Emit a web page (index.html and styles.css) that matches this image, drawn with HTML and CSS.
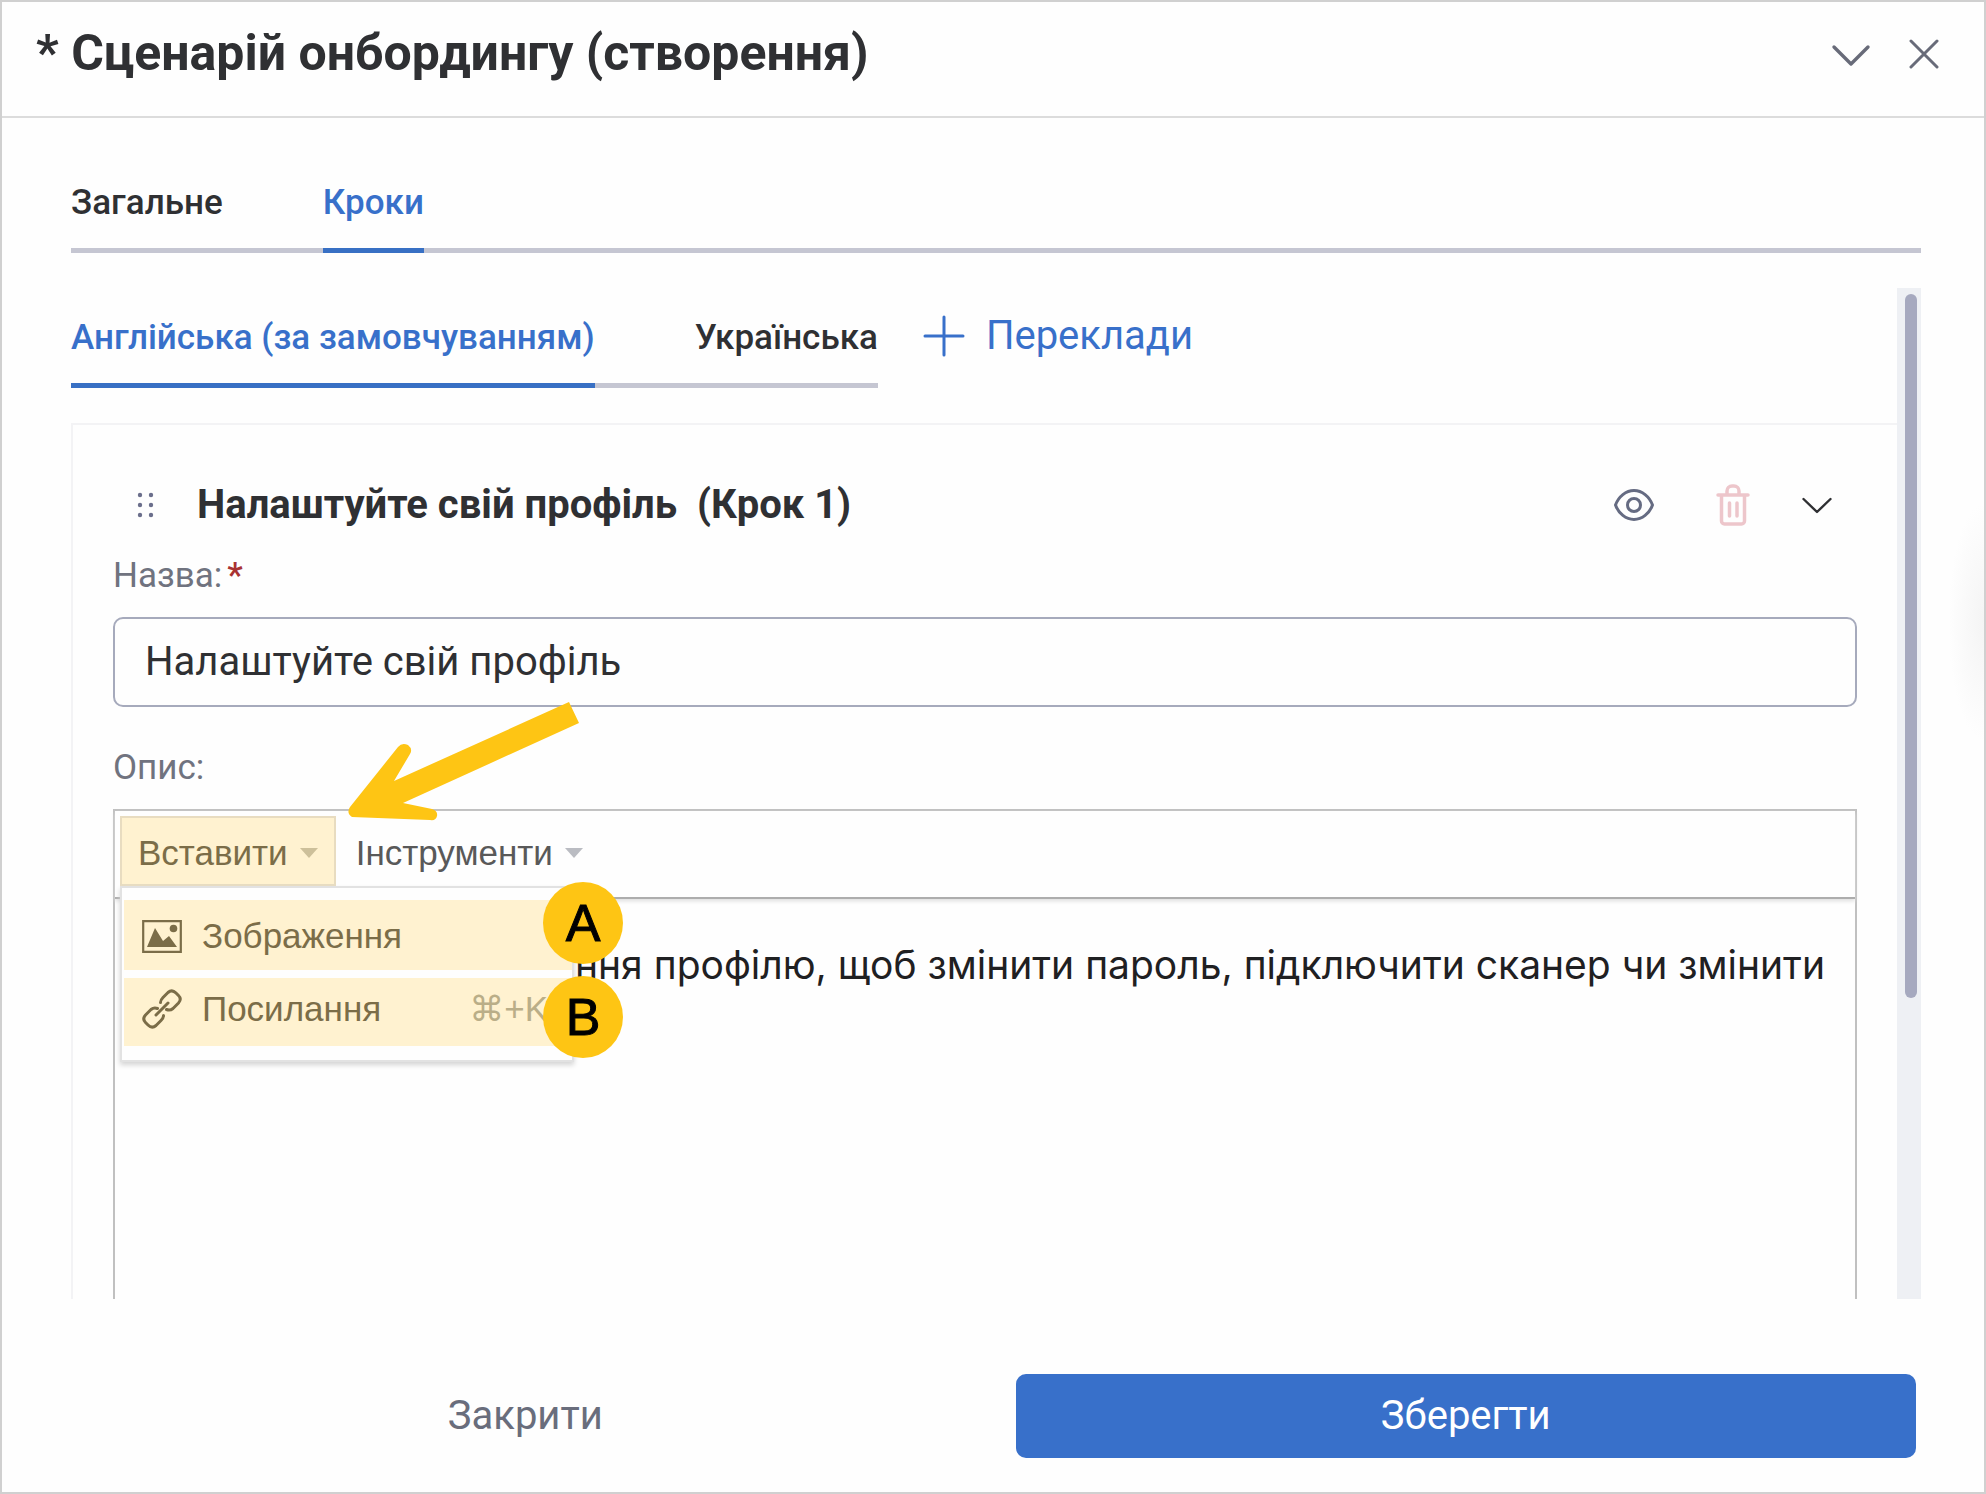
FILE: index.html
```html
<!DOCTYPE html>
<html lang="uk">
<head>
<meta charset="utf-8">
<meta name="viewport" content="width=device-width, initial-scale=1">
<title>Сценарій онбордингу (створення)</title>
<link rel="stylesheet" href="styles.css">
</head>
<body>
<main class="dialog">
  <header class="dialog-header">
    <h1 class="dialog-title">* Сценарій онбордингу (створення)</h1>
    <button class="icon-button" type="button" aria-label="Згорнути">
      <svg width="40" height="40" viewBox="0 0 40 40" fill="none" stroke="#686b79" stroke-width="3.400" stroke-linecap="round" stroke-linejoin="round"><path d="M3 14 20 31 37 14"/></svg>
    </button>
    <button class="icon-button" type="button" aria-label="Закрити вікно">
      <svg width="32" height="32" viewBox="0 0 32 32" fill="none" stroke="#686b79" stroke-width="3" stroke-linecap="round"><path d="M3 4 29 30M29 4 3 30"/></svg>
    </button>
  </header>

  <nav class="tabs tabs-main">
    <a class="tab" href="#general">Загальне</a>
    <a class="tab tab-active" href="#steps">Кроки</a>
  </nav>

  <div class="scroll-area">
    <div class="scroll-content">
      <div class="languages">
        <nav class="tabs">
          <a class="tab tab-active" href="#en">Англійська (за замовчуванням)</a>
          <a class="tab" href="#uk">Українська</a>
        </nav>
        <button class="add-translation" type="button">
          <svg width="42" height="42" viewBox="0 0 42 42" fill="none" stroke="#3870ca" stroke-width="3" stroke-linecap="round"><path d="M21 2v38M2 21h38"/></svg>
          Переклади
        </button>
      </div>

      <section class="step">
        <div class="step-header">
          <svg class="drag" width="18" height="26" viewBox="0 0 18 26" fill="#6b6f8c"><circle cx="3" cy="3" r="2.2"/><circle cx="14" cy="3" r="2.2"/><circle cx="3" cy="13" r="2.2"/><circle cx="14" cy="13" r="2.2"/><circle cx="3" cy="23" r="2.2"/><circle cx="14" cy="23" r="2.2"/></svg>
          <h2 class="step-title">Налаштуйте свій профіль&nbsp; (Крок 1)</h2>
          <button class="icon-button" type="button" aria-label="Перегляд">
            <svg width="42" height="42" viewBox="0 0 42 42" fill="none" stroke="#656b82" stroke-width="3"><path d="M2.500 21C5.500 12.500 13 6.500 21 6.500S36.500 12.500 39.500 21C36.500 29.500 29 35.500 21 35.500S5.500 29.500 2.500 21Z" stroke-linejoin="round"/><circle cx="21" cy="21" r="6.500"/></svg>
          </button>
          <button class="icon-button trash" type="button" aria-label="Видалити">
            <svg width="34" height="42" viewBox="0 0 34 42" fill="none" stroke="#edc6cb" stroke-width="3.500" stroke-linecap="round" stroke-linejoin="round"><path d="M2 11h30M5.500 11v26a3 3 0 0 0 3 3h17a3 3 0 0 0 3-3V11M11 11V7a5 5 0 0 1 5-5h2a5 5 0 0 1 5 5v4M13.500 19v13M21 19v13"/></svg>
          </button>
          <button class="icon-button" type="button" aria-label="Згорнути крок">
            <svg width="32" height="32" viewBox="0 0 32 32" fill="none" stroke="#2f3033" stroke-width="2.400" stroke-linecap="round" stroke-linejoin="round"><path d="M2.500 10 16 23 29.500 10"/></svg>
          </button>
        </div>

        <label class="label" for="step-name">Назва:<span class="required">*</span></label>
        <input class="text-input" id="step-name" type="text" value="Налаштуйте свій профіль">

        <span class="label label-description">Опис:</span>
        <div class="editor">
          <div class="toolbar">
            <button class="menu-button menu-button-open" type="button">Вставити<span class="caret"></span></button>
            <button class="menu-button" type="button">Інструменти<span class="caret"></span></button>
            <div class="menu">
              <button class="menu-item" type="button">
                <svg width="40" height="40" viewBox="0 0 40 40"><path d="M1.200 5.200h37.600v30.600H1.200z" fill="none" stroke="#7b6d48" stroke-width="2.200"/><path d="M5 31 13 12l8 13 6-5 8 11Z" fill="#7b6d48"/><circle cx="31.500" cy="12.500" r="3.800" fill="#7b6d48"/></svg>
                <span>Зображення</span>
              </button>
              <button class="menu-item menu-item-link" type="button">
                <svg width="40" height="40" viewBox="0 0 40 40" fill="none" stroke="#7b6d48" stroke-width="3" stroke-linecap="round" stroke-linejoin="round"><path d="M14 26 26 14M18.500 13.500Q18.500 11 21 8.500L26 3.500Q30 0 34 4L36.500 6.500Q40 10 36.500 14L31 19.500Q28 22 24.500 20.500M21.500 26.500Q21.500 29 19 31.500L14 36.500Q10 40 6 36L3.500 33.500Q0 30 3.500 26L9 20.500Q12 18 15.500 19.500"/></svg>
                <span>Посилання</span><span class="shortcut">⌘+K</span>
              </button>
              <span class="badge badge-a">A</span>
              <span class="badge badge-b">B</span>
            </div>
            <svg class="pointer" width="232" height="124" viewBox="0 0 232 124"><path d="M221 4 231 25 55 105 84 111Q90 113 89 118 88 123 82 122L4 119Q-2 115 2 109L50 49Q54 44 60 47 65 51 62 56L46 83Z" fill="#fec514"/></svg>
          </div>
          <p class="editor-text">ння профілю, щоб змінити пароль, підключити сканер чи змінити</p>
        </div>
      </section>
    </div>
    <div class="scrollbar"><div class="scrollbar-thumb"></div></div>
  </div>

  <footer class="dialog-footer">
    <button class="footer-button" type="button">Закрити</button>
    <button class="footer-button footer-button-primary" type="button">Зберегти</button>
  </footer>
  <div class="edge-shade"></div>
</main>
</body>
</html>
```
FILE: styles.css
```css
* {
  box-sizing: border-box;
}

body {
  margin: 0;
  font-family: Roboto, "Liberation Sans", sans-serif;
  color: #2f3033;
  background: #fefefe;
}

button {
  margin: 0;
  padding: 0;
  border: 0;
  background: none;
  color: inherit;
  font: inherit;
  cursor: pointer;
}

svg {
  display: block;
  flex: none;
}

.dialog {
  position: relative;
  display: flex;
  flex-direction: column;
  height: 100vh;
  min-height: 1000px;
  border: 2px solid #d0d0d0;
  overflow: hidden;
}

.dialog-header {
  display: flex;
  align-items: center;
  gap: 37px;
  padding: 20px 44px 32px 34px;
  border-bottom: 2px solid #dcdcdc;
}

.dialog-title {
  flex: 1;
  margin: 0;
  font-size: 50px;
  line-height: 62px;
  font-weight: 700;
}

.tabs {
  display: flex;
  gap: 100px;
  box-shadow: inset 0 -5px #c5c6d2;
}

.tabs-main {
  margin: 50px 63px 35px 69px;
}

.tab {
  padding: 14px 0 24px;
  border-bottom: 5px solid transparent;
  font-size: 35px;
  line-height: 42px;
  font-weight: 500;
  color: inherit;
  text-decoration: none;
  white-space: nowrap;
}

.tab-active {
  border-color: #3870c4;
  color: #3870ca;
}

.scroll-area {
  flex: 1;
  display: flex;
  min-height: 0;
  margin: 0 63px 0 69px;
}

.scroll-content {
  flex: 1;
  min-width: 0;
  overflow: hidden;
}

.scrollbar {
  flex: none;
  width: 24px;
  padding: 6px 4px 0 8px;
  background: #eef0f4;
}

.scrollbar-thumb {
  height: 70%;
  border-radius: 6px;
  background: #a6a9bf;
}

.languages {
  display: flex;
  align-items: flex-start;
  gap: 45px;
  padding-top: 15px;
}

.add-translation {
  display: flex;
  align-items: center;
  gap: 21px;
  padding-top: 10px;
  font-size: 40px;
  line-height: 46px;
  color: #3870ca;
}

.step {
  margin-top: 35px;
  padding: 50px 40px 0;
  border: 2px solid #f3f3f5;
  border-right: 0;
}

.step-header {
  display: flex;
  align-items: center;
  gap: 42px;
  padding: 0 24px;
}

.step-title {
  flex: 1;
  margin: 0;
  font-size: 40px;
  line-height: 60px;
  font-weight: 700;
}

.trash {
  margin: 0 9px 0 19px;
}

.label {
  display: block;
  padding: 16px 0;
  font-size: 35px;
  line-height: 50px;
  color: #70737f;
}

.required {
  margin-left: 5px;
  font-weight: 500;
  color: #a83232;
}

.text-input {
  display: block;
  width: 100%;
  height: 90px;
  padding: 0 30px 2px;
  border: 2px solid #a6aabc;
  border-radius: 10px;
  background: #fefefe;
  color: #2f3033;
  font: inherit;
  font-size: 40px;
}

.label-description {
  padding-top: 36px;
}

.editor {
  min-height: 600px;
  border: 2px solid #c0c0c0;
}

.toolbar {
  position: relative;
  display: flex;
  gap: 2px;
  padding: 5px;
  height: 88px;
  border-bottom: 2px solid #adadad;
  box-shadow: 0 2px 4px #dddddd;
}

.menu-button {
  display: flex;
  align-items: center;
  gap: 12px;
  height: 70px;
  padding: 4px 16px 0;
  border: 2px solid transparent;
  font-family: "Liberation Sans", Arial, sans-serif;
  font-size: 35px;
  color: #595959;
}

.menu-button-open {
  border-color: #e8dcc0;
  background: #fff2d0;
  color: #7b6d48;
}

.caret {
  border: 9px solid transparent;
  border-top: 10px solid #babcc2;
  border-bottom: 0;
}

.menu-button-open .caret {
  border-top-color: #cdc09a;
}

.menu {
  position: absolute;
  top: 75px;
  left: 5px;
  z-index: 1;
  display: flex;
  flex-direction: column;
  gap: 8px;
  width: 454px;
  padding: 12px 0 14px 2px;
  border: 2px solid #e2e2e2;
  background: #fefefe;
  box-shadow: 0 3px 5px #d4d4d4;
}

.menu-item {
  display: flex;
  align-items: center;
  gap: 20px;
  height: 70px;
  padding: 2px 18px 0;
  background: #fff2d0;
  color: #7b6d48;
  font-family: "Liberation Sans", Arial, sans-serif;
  font-size: 35px;
}

.menu-item-link {
  height: 68px;
  padding: 0 24px 6px 18px;
}

.shortcut {
  margin-left: auto;
  color: #baae88;
  font-family: "Liberation Sans", "DejaVu Sans", sans-serif;
}

.badge {
  position: absolute;
  left: 421px;
  width: 80px;
  border-radius: 50%;
  background: #fec514;
  color: #000000;
  font-family: "Liberation Sans", Arial, sans-serif;
  font-size: 52px;
  line-height: 82px;
  text-align: center;
  -webkit-text-stroke: 1px #000000;
}

.badge-a {
  top: -6px;
}

.badge-b {
  top: 88px;
}

.pointer {
  position: absolute;
  top: -113px;
  left: 233px;
}

.editor-text {
  margin: 0;
  padding: 38px 0 0 460px;
  font-family: Inter, "Liberation Sans", sans-serif;
  font-size: 39px;
  line-height: 56px;
  color: #1f2022;
  white-space: nowrap;
}

.dialog-footer {
  display: grid;
  grid-template-columns: 1fr 1fr;
  gap: 40px;
  padding: 75px 68px 34px 73px;
}

.footer-button {
  height: 84px;
  padding-bottom: 2px;
  border-radius: 10px;
  font-size: 40px;
  color: #696d7c;
}

.footer-button-primary {
  background: #3870ca;
  color: #ffffff;
}

.edge-shade {
  position: absolute;
  top: 500px;
  right: 0;
  width: 36px;
  height: 240px;
  background: radial-gradient(ellipse at right, #f4f4f4, transparent 70%);
}
```
